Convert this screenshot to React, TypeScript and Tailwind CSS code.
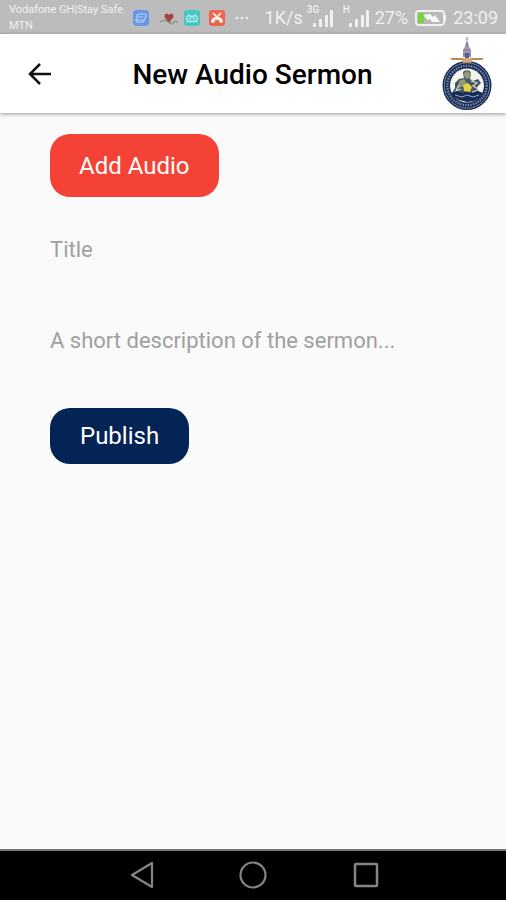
import React from 'react';

function Signal({ label }: { label: string }) {
  return (
    <span className="relative block h-[34px] w-7 shrink-0">
      <span className="absolute left-0 top-1 text-[10px] font-medium leading-[10px]">{label}</span>
      <svg viewBox="0 0 28 34" className="h-[34px] w-7" fill="currentColor" aria-hidden="true">
        <rect x="6" y="22" width="3" height="4" rx=".5" />
        <rect x="12" y="18" width="3" height="8" rx=".5" />
        <rect x="18" y="14" width="3" height="12" rx=".5" />
        <rect x="23" y="9" width="3" height="17" rx=".5" />
      </svg>
    </span>
  );
}

function NotificationIcons() {
  return (
    <svg viewBox="0 0 118 20" className="h-5 w-[118px] shrink-0" aria-hidden="true">
      <rect x="1" y="2" width="16" height="16" rx="4" fill="#6597e5" />
      <path d="M5 8q0-2 2-2h6q2 0 1 2l-2 5q-1 1-2 1H6q-2 0-2-2zM6 9h5M5 12h7" fill="none" stroke="#bcd4f6" strokeWidth="1.200" />
      <path d="M28 14l5-2 3 2 4 2 3-3 3 1" fill="none" stroke="#8b8d82" strokeWidth="1.200" />
      <path d="M37 14l4-4c2-3-2-6-4-3-2-3-6 0-4 3z" fill="#a8423f" />
      <path d="M35 13l4 1" stroke="#647a5d" strokeWidth="1.200" />
      <rect x="52" y="2" width="16" height="16" rx="3" fill="#49c5c1" />
      <path d="M55 13V9l2-2 2 2 1-1 1 1 2-2 2 2v4M54.500 13.500h11M57 11h2M61 11h2" fill="none" stroke="#bcf0ec" strokeWidth="1.300" />
      <rect x="77" y="2" width="16" height="16" rx="3" fill="#ed654d" />
      <path d="M81 5l4 4 4-4" fill="none" stroke="#fff0ec" strokeWidth="1.700" />
      <path d="M79 14c0-3 2-5 6-5s6 2 6 5l-1 1-3-1v-2h-4v2l-3 1z" fill="#fff0ec" />
      <circle cx="105" cy="10" r="1.300" fill="#ededed" />
      <circle cx="110" cy="10" r="1.300" fill="#ededed" />
      <circle cx="115" cy="10" r="1.300" fill="#ededed" />
    </svg>
  );
}

function Battery() {
  return (
    <svg viewBox="0 0 32 18" className="h-[18px] w-8 shrink-0" aria-hidden="true">
      <rect x="1" y="2" width="28" height="14" rx="3" fill="#b8b8b8" stroke="#f0f0f0" strokeWidth="2" />
      <rect x="3" y="4" width="6" height="10" fill="#7bd33f" />
      <path d="M29 6h2v6h-2z" fill="#f0f0f0" />
      <path d="M8 6l7-1 3 3 2-2 5 7-8 0-2-3-2 1z" fill="#f7f7f7" />
    </svg>
  );
}

function StatusBar() {
  return (
    <div className="flex h-[34px] shrink-0 items-center bg-[#bcbcbc] pl-[9px] pr-2 pt-0.5 text-[#f0f0f0]">
      <p className="w-[123px] shrink-0 whitespace-nowrap text-[11px] leading-4">
        Vodafone GH|Stay Safe
        <br />
        MTN
      </p>
      <NotificationIcons />
      <div className="ml-auto flex items-center text-lg leading-8">
        <span className="mr-1">1K/s</span>
        <Signal label="3G" />
        <span className="w-2" />
        <Signal label="H" />
        <span className="ml-1 mr-[7px]">27%</span>
        <Battery />
        <span className="ml-1.5">23:09</span>
      </div>
    </div>
  );
}

function Crest() {
  return (
    <svg viewBox="0 0 52 76" className="h-[76px] w-[52px]" role="img" aria-label="Church crest">
      <path d="M26 0v8M24.500 3h3" stroke="#a9a0ad" strokeWidth="1" />
      <path d="M25 6h2l1 5 2 3v7h-8v-7l2-3z" fill="#8d88a3" />
      <path d="M23 12h6M22 16h8" stroke="#c2a0ae" strokeWidth="1.200" />
      <path d="M24 17h4v5h-4z" fill="#5c5c84" />
      <circle cx="26" cy="49.500" r="24.500" fill="#162b55" />
      <circle cx="26" cy="49.500" r="22.700" fill="none" stroke="#8f9bb0" strokeWidth=".8" />
      <circle cx="26" cy="49.500" r="19.700" fill="none" stroke="#7f8da5" strokeWidth="2.400" strokeDasharray="1.400 1.200" />
      <circle cx="26" cy="49.500" r="17" fill="#f5f5ef" />
      <path d="M9 22h34l-2 2H31l-1 3h-8l-1-3H11z" fill="#bd8957" />
      <path d="M22 22h8l1 4H21z" fill="#d5aa75" />
      <path d="M22 37c0-3 7-4 8 0l-1 6 3 2 5-2 3 4-4 4 2 6-6 5-8-2-9 2-4-5 3-5 0-5 4-4 5-1z" fill="#42566b" />
      <path d="M23 37l3-2 4 2-1 5-4 1-2-3z" fill="#8f9b78" />
      <path d="M18 45l5-2 3 4-3 3-6 2z" fill="#8e9a70" />
      <path d="M22 49l5-2 4 4-2 5-6-1z" fill="#e5d23f" />
      <path d="M18 49l-3 6 5-2M30 45l6 2-4 3 5 3M31 56l6-2" fill="none" stroke="#d7dcc9" strokeWidth="1.300" />
      <path d="M10 57l6-2 5 2 5-1 6 1 5-2 5 2-4 5-5 3-7 1-8-2-5-3z" fill="#162b55" />
      <path d="M14 59l7 2 5-2 6 2 6-2" fill="none" stroke="#9aa7ad" strokeWidth="1" />
    </svg>
  );
}

function Header() {
  return (
    <header className="z-10 flex h-[79px] shrink-0 items-center justify-between bg-white pl-6 pr-[13px] shadow-[0_1px_4px_rgba(0,0,0,0.4)]">
      <button type="button" aria-label="Go back" className="w-10">
        <svg viewBox="0 0 32 32" className="h-8 w-8" fill="none" stroke="#111" strokeWidth="2.500" aria-hidden="true">
          <path d="M27 16H6M16 6L6 16l10 10" />
        </svg>
      </button>
      <h1 className="pt-0.5 text-[28px] font-medium leading-8 text-black">New Audio Sermon</h1>
      <Crest />
    </header>
  );
}

function NavigationBar() {
  return (
    <nav aria-label="System navigation" className="flex h-[51px] shrink-0 items-center justify-center gap-20 border-t-2 border-[#777] bg-black pb-0.5">
      <button type="button" aria-label="Back">
        <svg viewBox="0 0 32 32" className="h-8 w-8" fill="none" stroke="#858585" strokeWidth="2.200" strokeLinejoin="round" aria-hidden="true">
          <path d="M27 4v24L7 16z" />
        </svg>
      </button>
      <button type="button" aria-label="Home">
        <svg viewBox="0 0 32 32" className="h-8 w-8" fill="none" stroke="#858585" strokeWidth="2.200" aria-hidden="true">
          <circle cx="16" cy="16" r="12.500" />
        </svg>
      </button>
      <button type="button" aria-label="Recent apps">
        <svg viewBox="0 0 32 32" className="h-8 w-8" fill="none" stroke="#858585" strokeWidth="2.500" aria-hidden="true">
          <rect x="6" y="5" width="22" height="22" rx="1" />
        </svg>
      </button>
    </nav>
  );
}

export default function App() {
  return (
    <div className="flex min-h-screen flex-col bg-[#fafafa] font-[Roboto,sans-serif]">
      <StatusBar />
      <Header />
      <main className="flex-1 px-[50px] pt-[21px]">
        <form className="flex flex-col items-start" onSubmit={(event) => event.preventDefault()}>
          <button type="button" className="h-[63px] rounded-[20px] bg-[#f44336] px-[29px] text-2xl text-white">
            Add Audio
          </button>
          <input
            type="text"
            name="title"
            aria-label="Title"
            placeholder="Title"
            className="mt-8 h-10 w-full bg-transparent text-[22px] text-[#222] outline-none placeholder:text-[#a0a0a0]"
          />
          <input
            type="text"
            name="description"
            aria-label="Description"
            placeholder="A short description of the sermon..."
            className="mt-[51px] h-10 w-full bg-transparent text-[22px] text-[#222] outline-none placeholder:text-[#a0a0a0]"
          />
          <button type="submit" className="mt-12 h-14 rounded-[20px] bg-[#032454] px-[30px] text-2xl text-white">
            Publish
          </button>
        </form>
      </main>
      <NavigationBar />
    </div>
  );
}
